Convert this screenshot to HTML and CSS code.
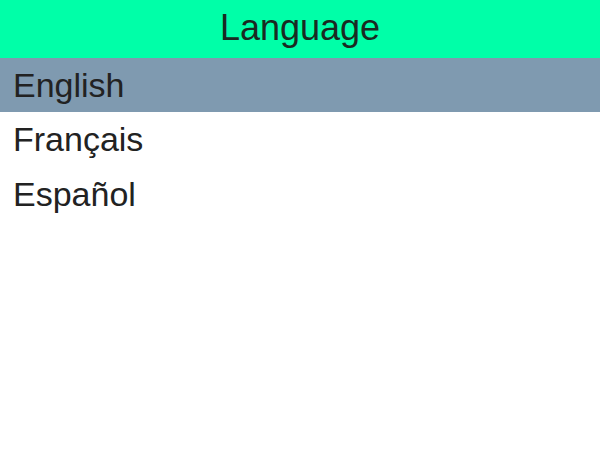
FILE: index.html
```html
<!DOCTYPE html>
<html>
<head>
<meta charset="utf-8">
<link rel="stylesheet" href="styles.css">
</head>
<body>
<div class="header">Language</div>
<ul class="list">
<li class="item selected">English</li>
<li class="item">Français</li>
<li class="item">Español</li>
</ul>
</body>
</html>
```
FILE: styles.css
```css
html, body { margin: 0; padding: 0; background: #fff; }
body { font-family: "Liberation Sans", Arial, sans-serif; color: #222; width: 600px; height: 455px; overflow: hidden; }
.header { height: 58px; box-sizing: border-box; padding-bottom: 3px; background: #00ffa8; display: flex; align-items: center; justify-content: center; font-size: 36px; color: #1a2a22; }
.list { list-style: none; margin: 0; padding: 0; }
.item { height: 55px; display: flex; align-items: center; padding-left: 13px; font-size: 34px; }
.selected { background: #7f9ab0; height: 54px; }
```
